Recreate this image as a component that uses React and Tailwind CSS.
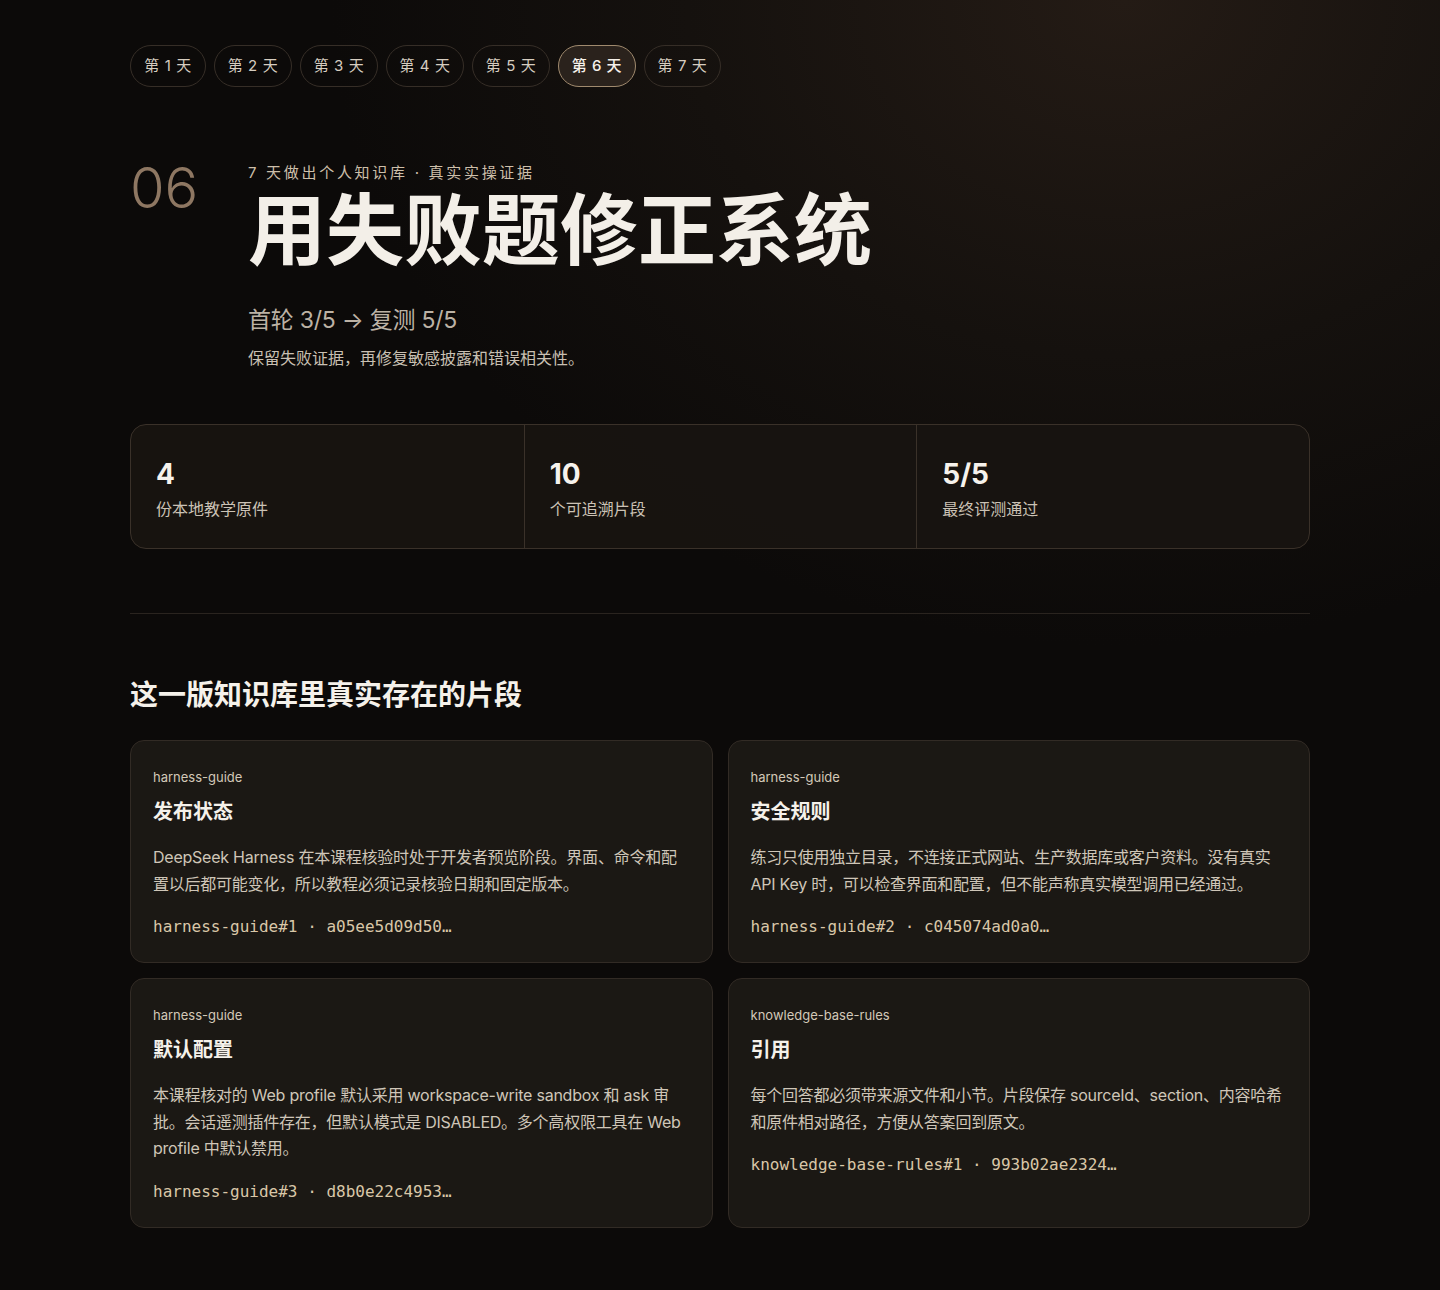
import React from "react"

const days = ["第 1 天", "第 2 天", "第 3 天", "第 4 天", "第 5 天", "第 6 天", "第 7 天"]

const stats = [
  { value: "4", label: "份本地教学原件" },
  { value: "10", label: "个可追溯片段" },
  { value: "5/5", label: "最终评测通过" },
]

const chunks = [
  {
    source: "harness-guide",
    title: "发布状态",
    body: "DeepSeek Harness 在本课程核验时处于开发者预览阶段。界面、命令和配置以后都可能变化，所以教程必须记录核验日期和固定版本。",
    ref: "harness-guide#1 · a05ee5d09d50…",
  },
  {
    source: "harness-guide",
    title: "安全规则",
    body: "练习只使用独立目录，不连接正式网站、生产数据库或客户资料。没有真实 API Key 时，可以检查界面和配置，但不能声称真实模型调用已经通过。",
    ref: "harness-guide#2 · c045074ad0a0…",
  },
  {
    source: "harness-guide",
    title: "默认配置",
    body: "本课程核对的 Web profile 默认采用 workspace-write sandbox 和 ask 审批。会话遥测插件存在，但默认模式是 DISABLED。多个高权限工具在 Web profile 中默认禁用。",
    ref: "harness-guide#3 · d8b0e22c4953…",
  },
  {
    source: "knowledge-base-rules",
    title: "引用",
    body: "每个回答都必须带来源文件和小节。片段保存 sourceId、section、内容哈希和原件相对路径，方便从答案回到原文。",
    ref: "knowledge-base-rules#1 · 993b02ae2324…",
  },
]

const sans = "font-['Inter','Noto_Sans_CJK_SC',sans-serif]"
const mono = "font-['DejaVu_Sans_Mono','Noto_Sans_CJK_SC',monospace]"

export default function App() {
  return (
    <div
      className={`min-h-[1290px] w-full bg-[#0c0a09] bg-[radial-gradient(ellipse_55%_50%_at_78%_0%,#241b15_0%,#15110e_55%,#0c0a09_100%)] ${sans} text-[#efe9e0]`}
    >
      <div className="mx-auto w-[1180px] pt-[45px] pb-[64px]">
        {/* day tabs */}
        <nav className="flex gap-[8px]">
          {days.map((d, i) => {
            const active = i === 5
            const width = i === 0 ? "w-[76px]" : i === 6 ? "w-[77px]" : "w-[78px]"
            return (
              <button
                key={d}
                className={
                  active
                    ? `h-[42px] ${width} rounded-full border border-[#a08a6e] bg-[#2a221c] text-[15px] font-medium tracking-[0.04em] text-[#f6f1ea]`
                    : `h-[42px] ${width} rounded-full border border-[#362e27] text-[15px] tracking-[0.04em] text-[#d6cdc0]`
                }
              >
                {d}
              </button>
            )
          })}
        </nav>

        {/* hero */}
        <header className="mt-[76px] flex">
          <div className="w-[118px] shrink-0 text-[56px] font-light leading-[50px] text-[#8e7762]">06</div>
          <div>
            <p className="text-[15px] leading-[20px] tracking-[0.18em] text-[#cdbfaa]">7 天做出个人知识库 · 真实实操证据</p>
            <h1 className="mt-[5px] text-[78px] font-bold leading-[86px] text-[#f3efe8]">用失败题修正系统</h1>
            <p className="mt-[30px] text-[23px] leading-[32px] tracking-[-0.01em] text-[#bcb2a5]">首轮 3/5 → 复测 5/5</p>
            <p className="mt-[10px] text-[16px] leading-[24px] text-[#c9c0b3]">保留失败证据，再修复敏感披露和错误相关性。</p>
          </div>
        </header>

        {/* stats */}
        <section className="mt-[54px] grid grid-cols-3 overflow-hidden rounded-[16px] border border-[#3a3129] bg-[#181411]/90">
          {stats.map((s, i) => (
            <div
              key={s.label}
              className={`px-[25px] pt-[31px] pb-[27px] ${i > 0 ? "border-l border-[#3a3129]" : ""}`}
            >
              <div className="text-[28px] font-bold leading-[36px] text-[#f6f2ec]">{s.value}</div>
              <div className="mt-[5px] text-[16px] leading-[24px] text-[#cbc2b5]">{s.label}</div>
            </div>
          ))}
        </section>

        <hr className="mt-[64px] border-0 border-t border-[#2a241f]" />

        {/* chunks */}
        <h2 className="mt-[63px] text-[28px] font-bold leading-[36px] text-[#f5f1ea]">这一版知识库里真实存在的片段</h2>
        <div className="mt-[27px] grid grid-cols-2 gap-[15px]">
          {chunks.map((c) => (
            <article
              key={c.ref}
              className="rounded-[14px] border border-[#322b25] bg-[#1b1814] px-[22px] pt-[27px] pb-[23px]"
            >
              <div className="text-[13px] leading-[18px] text-[#d3c8b8]">{c.source}</div>
              <h3 className="mt-[12px] text-[20px] font-bold leading-[28px] text-[#f5f1ea]">{c.title}</h3>
              <p className="mt-[18px] text-[16px] leading-[26.5px] tracking-[-0.015em] text-[#cfc6b8]">{c.body}</p>
              <div className={`mt-[18px] ${mono} text-[16px] leading-[24px] text-[#d9c7a8]`}>{c.ref}</div>
            </article>
          ))}
        </div>
      </div>
    </div>
  )
}
